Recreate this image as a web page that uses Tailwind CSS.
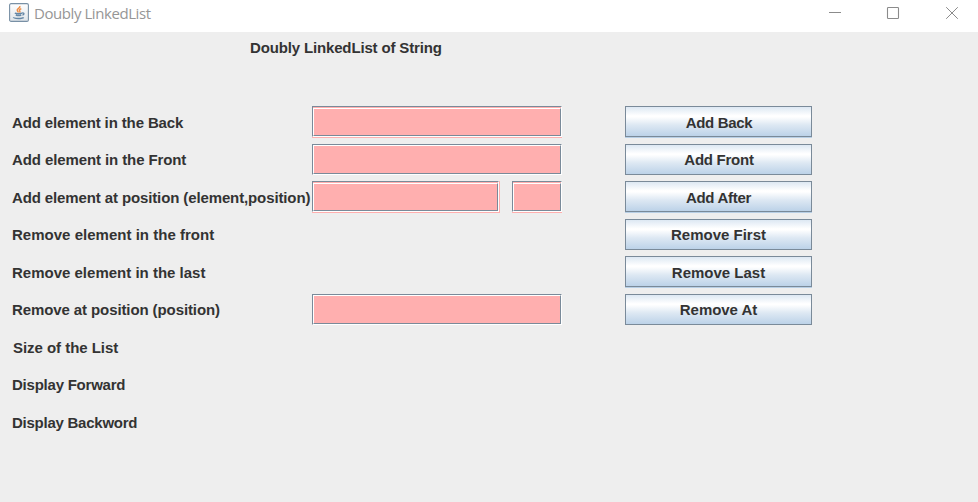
<!DOCTYPE html>
<html lang="en">
<head>
<meta charset="utf-8">
<title>Doubly LinkedList</title>
<script src="https://cdn.jsdelivr.net/npm/@tailwindcss/browser@4"></script>
</head>
<body class="w-[978px] h-[502px] overflow-hidden bg-[#eeeeee] text-[#333333] flex flex-col font-['Liberation_Sans',Arial,sans-serif]">
<header class="h-8 shrink-0 bg-white flex items-start">
  <svg class="ml-[9px] mt-[3px] w-5 h-[19px] shrink-0" viewBox="0 0 20 19" fill="none">
    <defs><linearGradient id="g" x1="0" y1="0" x2="0" y2="1"><stop offset="0" stop-color="#fff"/><stop offset="1" stop-color="#dfe4e9"/></linearGradient></defs>
    <rect x=".6" y=".6" width="18.8" height="17.8" rx="1.5" fill="url(#g)" stroke="#7890a5" stroke-width="1.1"/>
    <path d="M10.8 3c1 2-3.3 2.800-2.500 4.500.3.800 1 1.200 1 2M12.300 5.600c-1.600.8-2.400 1.300-1.500 2.500.4.600 0 1.100-.3 1.400" stroke="#ee8d45" stroke-width="1.500"/>
    <path d="M5.800 10.200c1.500.7 5.700.7 7.300 0M6.800 12c1.500.6 4 .6 5.500 0M13.200 10c2.300-.5 2.200 1.500.2 2.200M4.500 14.300c0 1.500 9.300 1.500 10.100 0" stroke="#6587a5" stroke-width="1.400"/>
  </svg>
  <h1 class="ml-[5px] mt-[3px] leading-[21px] text-[15px] tracking-[-0.43px] text-[#969696] font-['Open_Sans','Noto_Sans',sans-serif] font-normal whitespace-nowrap w-[130px]"><span>Doubly LinkedList</span></h1>
  <svg class="ml-[665px] mt-[6px] w-[130px] h-[14px] shrink-0" viewBox="0 0 130 14" fill="none" stroke="#8b8b8b">
    <path d="M0 6.5h12"/><rect x="58.5" y="1.5" width="11" height="11" rx=".8" stroke-width="1.1"/><path d="M117.2 1.2l11.6 11.6M128.8 1.2l-11.6 11.6"/>
  </svg>
</header>
<main class="flex flex-col text-[15px] font-bold">
  <h2 class="pl-[250px] h-[74px] leading-8 whitespace-nowrap tracking-[-0.15px]"><span>Doubly LinkedList of String</span></h2>
  <section id="rows" class="grid grid-cols-[312px_313px_187px] grid-rows-[38px_37px_38px_37px_38px_37px_38px_37px_38px] items-start"></section>
</main>
<script>
const field = (width, tall) => `<div class="${width} ${tall ? 'h-[31px] shadow-[0_1px_#ffafaf] pt-px' : 'h-[31px]'} bg-[#ffafaf] border border-t-[#7a8a99] border-l-[#7a8a99] border-r-white border-b-white"><div class="h-full border border-t-white border-l-white border-r-[#7a8a99] border-b-[#7a8a99]"></div></div>`;
const wide = 'w-[250px]';
const rows = [
  ['Add element in the Back', 'tracking-[-0.13px]', field(wide, true), 'Add Back', 'pl-px tracking-[-0.32px]'],
  ['Add element in the Front', 'tracking-[-0.1px]', field(wide, false), 'Add Front', 'pl-px tracking-[-0.25px]'],
  ['Add element at position (element,position)', 'tracking-[-0.12px]', `<div class="shadow-[1px_0_#ffafaf] h-8">${field('w-[187px]', true)}</div>` + field('w-[50px] ml-[13px]', true), 'Add After', 'tracking-[-0.3px]'],
  ['Remove element in the front', 'tracking-[0.02px]', '', 'Remove First', ''],
  ['Remove element in the last', '', '', 'Remove Last', ''],
  ['Remove at position (position)', 'tracking-[-0.1px]', field(wide, false), 'Remove At', 'tracking-[-0.05px]'],
  ['Size of the List', 'ml-px tracking-[-0.04px]', '', '', ''],
  ['Display Forward', 'tracking-[-0.23px]', '', '', ''],
  ['Display Backword', 'tracking-[-0.25px]', '', '', '']
];
document.getElementById('rows').innerHTML = rows.map(([label, labelSpacing, inputs, action, actionSpacing], i) => `
  <label class="pl-3 ${i % 2 ? 'leading-[31px]' : 'leading-[33px]'} whitespace-nowrap ${labelSpacing}"><span>${label}</span></label>
  <div class="flex">${inputs}</div>
  ${action ? `<button class="h-[31px] border border-[#7a8a99] bg-[linear-gradient(180deg,#dde8f3_0%,#ffffff_30%,#ffffff_34%,#dde8f3_62%,#bcd2e8_100%)] ${actionSpacing} ${i % 2 ? 'leading-[29px] pb-px' : 'leading-[31px] shadow-[0_1px_#b8cfe5]'}"><span>${action}</span></button>` : '<div></div>'}`).join('');
</script>
</body>
</html>
